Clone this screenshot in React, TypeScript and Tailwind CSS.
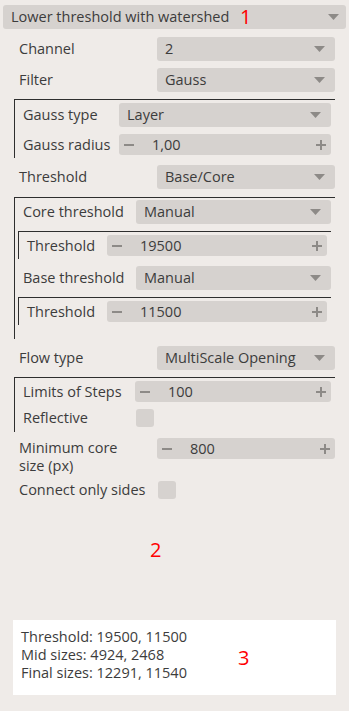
import React from 'react';

const Arrow: React.FC = () => (
  <svg width="11" height="6" viewBox="0 0 11 6" className="shrink-0">
    <path d="M0 0 H11 L5.5 6 Z" fill="#8d8a87" />
  </svg>
);

const Combo: React.FC<{ value: string; arrowRight?: string }> = ({ value, arrowRight = 'pr-[10px]' }) => (
  <div className={`flex h-[24px] flex-1 items-center justify-between rounded-[3px] bg-[#d6d2cf] pl-[8px] ${arrowRight}`}>
    <span>{value}</span>
    <Arrow />
  </div>
);

const Spin: React.FC<{ value: string }> = ({ value }) => (
  <div className="flex h-[21px] flex-1 items-center rounded-[3px] bg-[#d6d2cf] pl-[5px] pr-[5px]">
    <span className="h-[2px] w-[10px] bg-[#8d8a87]" />
    <span className="ml-[18px] flex-1">{value}</span>
    <span className="relative h-[10px] w-[10px]">
      <span className="absolute left-0 top-[4px] h-[2px] w-[10px] bg-[#8d8a87]" />
      <span className="absolute left-[4px] top-0 h-[10px] w-[2px] bg-[#8d8a87]" />
    </span>
  </div>
);

const Check: React.FC = () => <div className="h-[18px] w-[18px] rounded-[3px] bg-[#d6d2cf]" />;

const Row: React.FC<{ label: string; labelW: string; children: React.ReactNode; className?: string }> = ({
  label,
  labelW,
  children,
  className = '',
}) => (
  <div className={`flex items-center ${className}`}>
    <span className={`shrink-0 ${labelW}`}>{label}</span>
    {children}
  </div>
);

export default function App() {
  return (
    <div
      className="flex h-[711px] w-[349px] flex-col bg-[#efebe8] text-[14.5px] leading-[18px] text-[#3c3c3c]"
      style={{ fontFamily: '"Open Sans", "DejaVu Sans", sans-serif' }}
    >
      <div className="px-[3px] pt-[5px]">
        <div className="relative">
          <Combo value="Lower threshold with watershed" arrowRight="pr-[7px]" />
          <span className="absolute left-[237px] top-[1px] text-[20px] leading-[22px] text-[#ff0000]">1</span>
        </div>
      </div>

      <div className="flex flex-col pl-[14px] pr-[14px]">
        <Row label="Channel" labelW="w-[138px]" className="mt-[8px] pl-[5px]">
          <Combo value="2" />
        </Row>
        <Row label="Filter" labelW="w-[138px]" className="mt-[7px] pl-[5px]">
          <Combo value="Gauss" />
        </Row>

        {/* gauss group */}
        <div className="mt-[7px] flex flex-col border-l border-t border-[#2e2e2e] pb-[3px] pl-[8px] pr-[4px] pt-[3px]">
          <Row label="Gauss type" labelW="w-[96px]">
            <Combo value="Layer" />
          </Row>
          <Row label="Gauss radius" labelW="w-[96px]" className="mt-[7px]">
            <Spin value="1,00" />
          </Row>
        </div>

        <Row label="Threshold" labelW="w-[138px]" className="mt-[7px] pl-[5px]">
          <Combo value="Base/Core" />
        </Row>

        {/* threshold group */}
        <div className="mt-[8px] flex flex-col border-l border-t border-[#2e2e2e] pb-[14px] pl-[3px] pr-[4px] pt-[2px]">
          <Row label="Core threshold" labelW="w-[113px]" className="pl-[5px]">
            <Combo value="Manual" />
          </Row>
          <div className="mt-[7px] flex flex-col border-l border-t border-[#2e2e2e] pb-[3px] pl-[8px] pr-[4px] pt-[3px]">
            <Row label="Threshold" labelW="w-[80px]">
              <Spin value="19500" />
            </Row>
          </div>
          <Row label="Base threshold" labelW="w-[113px]" className="mt-[7px] pl-[5px]">
            <Combo value="Manual" />
          </Row>
          <div className="mt-[7px] flex flex-col border-l border-t border-[#2e2e2e] pb-[3px] pl-[8px] pr-[4px] pt-[3px]">
            <Row label="Threshold" labelW="w-[80px]">
              <Spin value="11500" />
            </Row>
          </div>
        </div>

        <Row label="Flow type" labelW="w-[138px]" className="mt-[7px] pl-[5px]">
          <Combo value="MultiScale Opening" />
        </Row>

        {/* flow group */}
        <div className="mt-[7px] flex flex-col border-l border-t border-[#2e2e2e] pb-[5px] pl-[8px] pr-[4px] pt-[3px]">
          <Row label="Limits of Steps" labelW="w-[112px]">
            <Spin value="100" />
          </Row>
          <Row label="Reflective" labelW="w-[113px]" className="mt-[7px]">
            <Check />
          </Row>
        </div>

        <div className="mt-[6px] flex items-start pl-[5px]">
          <span className="mt-[1px] w-[138px] shrink-0">
            Minimum core
            <br />
            size (px)
          </span>
          <Spin value="800" />
        </div>
        <Row label="Connect only sides" labelW="w-[139px]" className="mt-[6px] pl-[5px]">
          <Check />
        </Row>
      </div>

      <div className="flex-1 pl-[150px] pt-[40px]">
        <span className="text-[20px] leading-[22px] text-[#ff0000]">2</span>
      </div>

      <div className="mx-[13px] mb-[16px] flex h-[75px] items-center bg-white pl-[8px]">
        <div className="w-[217px] self-start pt-[8px]">
          <div>Threshold: 19500, 11500</div>
          <div>Mid sizes: 4924, 2468</div>
          <div>Final sizes: 12291, 11540</div>
        </div>
        <span className="text-[20px] leading-[22px] text-[#ff0000]">3</span>
      </div>
    </div>
  );
}
